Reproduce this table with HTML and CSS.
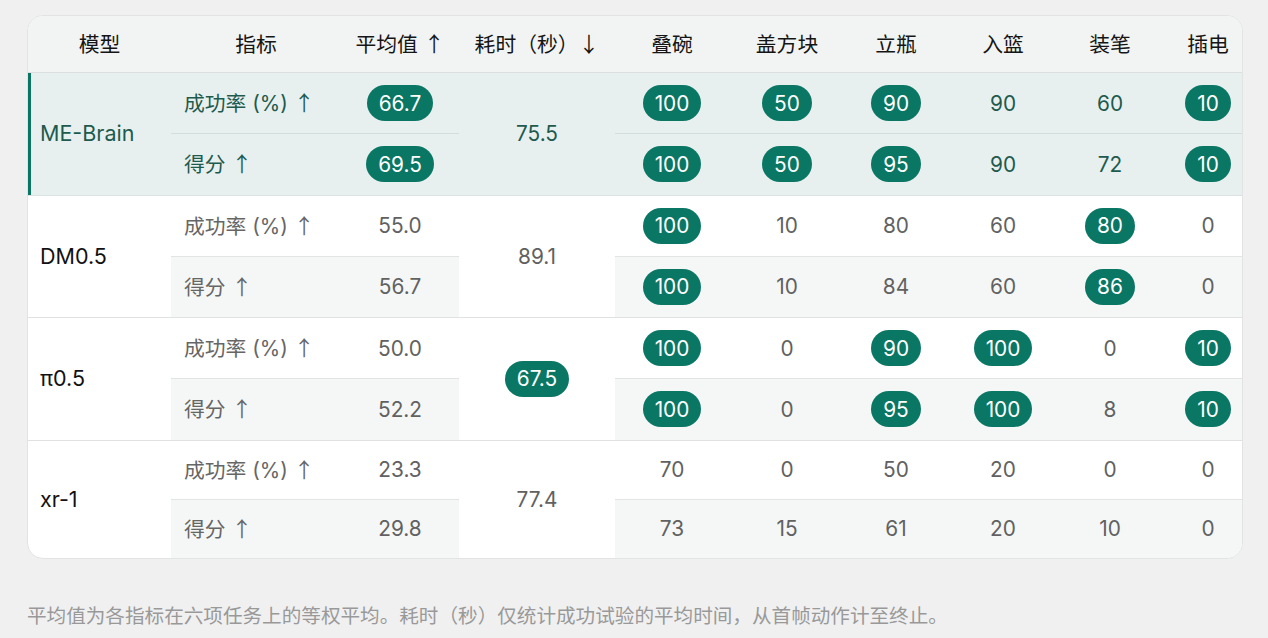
FILE: index.html
```html
<!DOCTYPE html>
<html lang="zh">
<head>
<meta charset="utf-8">
<title>评测结果</title>
<link rel="stylesheet" href="styles.css">
</head>
<body>
<div class="page">
  <div class="card">
    <table class="results">
      <colgroup>
        <col class="c-model"><col class="c-metric"><col class="c-avg"><col class="c-time">
        <col class="c-t1"><col class="c-t2"><col class="c-t3"><col class="c-t4"><col class="c-t5"><col class="c-t6">
      </colgroup>
      <thead>
        <tr>
          <th>模型</th><th>指标</th><th>平均值 <span class="arr">↑</span></th><th>耗时（秒）<span class="arr">↓</span></th>
          <th>叠碗</th><th>盖方块</th><th>立瓶</th><th>入篮</th><th>装笔</th><th class="last-col">插电</th>
        </tr>
      </thead>
      <tbody class="group hl">
        <tr class="sub1">
          <td class="model accent" rowspan="2">ME-Brain</td>
          <td class="metric">成功率 (%) <span class="arr">↑</span></td>
          <td><span class="pill">66.7</span></td>
          <td class="time" rowspan="2">75.5</td>
          <td><span class="pill">100</span></td><td><span class="pill">50</span></td><td><span class="pill">90</span></td><td>90</td><td>60</td><td class="last-col"><span class="pill">10</span></td>
        </tr>
        <tr class="sub2">
          <td class="metric">得分 <span class="arr">↑</span></td>
          <td><span class="pill">69.5</span></td>
          <td><span class="pill">100</span></td><td><span class="pill">50</span></td><td><span class="pill">95</span></td><td>90</td><td>72</td><td class="last-col"><span class="pill">10</span></td>
        </tr>
      </tbody>
      <tbody class="group">
        <tr class="sub1">
          <td class="model" rowspan="2">DM0.5</td>
          <td class="metric">成功率 (%) <span class="arr">↑</span></td>
          <td>55.0</td>
          <td class="time" rowspan="2">89.1</td>
          <td><span class="pill">100</span></td><td>10</td><td>80</td><td>60</td><td><span class="pill">80</span></td><td class="last-col">0</td>
        </tr>
        <tr class="sub2">
          <td class="metric">得分 <span class="arr">↑</span></td>
          <td>56.7</td>
          <td><span class="pill">100</span></td><td>10</td><td>84</td><td>60</td><td><span class="pill">86</span></td><td class="last-col">0</td>
        </tr>
      </tbody>
      <tbody class="group">
        <tr class="sub1">
          <td class="model" rowspan="2">π0.5</td>
          <td class="metric">成功率 (%) <span class="arr">↑</span></td>
          <td>50.0</td>
          <td class="time" rowspan="2"><span class="pill">67.5</span></td>
          <td><span class="pill">100</span></td><td>0</td><td><span class="pill">90</span></td><td><span class="pill">100</span></td><td>0</td><td class="last-col"><span class="pill">10</span></td>
        </tr>
        <tr class="sub2">
          <td class="metric">得分 <span class="arr">↑</span></td>
          <td>52.2</td>
          <td><span class="pill">100</span></td><td>0</td><td><span class="pill">95</span></td><td><span class="pill">100</span></td><td>8</td><td class="last-col"><span class="pill">10</span></td>
        </tr>
      </tbody>
      <tbody class="group last">
        <tr class="sub1">
          <td class="model" rowspan="2">xr-1</td>
          <td class="metric">成功率 (%) <span class="arr">↑</span></td>
          <td>23.3</td>
          <td class="time" rowspan="2">77.4</td>
          <td>70</td><td>0</td><td>50</td><td>20</td><td>0</td><td class="last-col">0</td>
        </tr>
        <tr class="sub2">
          <td class="metric">得分 <span class="arr">↑</span></td>
          <td>29.8</td>
          <td>73</td><td>15</td><td>61</td><td>20</td><td>10</td><td class="last-col">0</td>
        </tr>
      </tbody>
    </table>
  </div>
  <p class="note">平均值为各指标在六项任务上的等权平均。耗时（秒）仅统计成功试验的平均时间，从首帧动作计至终止。</p>
</div>
</body>
</html>
```

FILE: styles.css
```css
html, body {
  margin: 0;
  padding: 0;
  background: #f0f0f0;
}

body {
  font-family: "Inter", "Noto Sans CJK SC", sans-serif;
  color: #222;
}

.page {
  padding: 15px 25px 0 27px;
}

.card {
  background: #fff;
  border: 1px solid #e2e4e3;
  border-radius: 16px;
  overflow: hidden;
}

.results {
  width: 100%;
  table-layout: fixed;
  border-collapse: separate;
  border-spacing: 0;
  font-size: 20.8px;
  line-height: 33px;
}

.c-model { width: 143px; }
.c-metric { width: 170px; }
.c-avg { width: 118px; }
.c-time { width: 156px; }
.c-t1 { width: 114px; }
.c-t2 { width: 116px; }
.c-t3 { width: 102px; }
.c-t4 { width: 112px; }
.c-t5 { width: 102px; }
.c-t6 { width: 81px; }

.arr {
  font-family: "Noto Sans CJK SC", sans-serif;
}

.results th {
  background: #f2f4f3;
  font-weight: 400;
  color: #151515;
  padding: 11px 0;
  text-align: center;
  border-bottom: 1px solid #dcdfde;
  white-space: nowrap;
}

.results td {
  padding: 12.125px 0;
  text-align: center;
  vertical-align: middle;
  color: #616161;
  white-space: nowrap;
}

.results .last-col {
  padding-left: 13px;
}

.results td.model {
  text-align: left;
  padding-left: 12px;
  color: #111;
  font-size: 21.5px;
}

.results td.metric {
  text-align: left;
  padding-left: 13px;
  color: #666;
}

/* separators */
.sub1 td {
  border-bottom: 1px solid #e1e4e3;
}
.sub1 td.model,
.sub1 td.time,
.sub2 td {
  border-bottom: 1px solid #dfe2e1;
}
.group.last .sub1 td.model,
.group.last .sub1 td.time,
.group.last .sub2 td {
  border-bottom: none;
}

/* shaded second sub-row */
.sub2 td {
  background: #f5f7f6;
}

/* highlighted group */
.group.hl td {
  background: #e7f0ee;
  color: #1e5a4e;
}
.group.hl .sub1 td {
  border-bottom-color: #d2dedb;
}
.group.hl .sub1 td.model,
.group.hl .sub1 td.time,
.group.hl .sub2 td {
  border-bottom-color: #dbe2e0;
}
.results td.accent {
  box-shadow: inset 3px 0 0 #0a7563;
}

.pill {
  display: inline-block;
  background: #0a7664;
  color: #fff;
  border-radius: 18px;
  padding: 1.5px 12px;
  line-height: 33px;
}

.note {
  margin: 42px 0 0 0;
  font-size: 19.6px;
  line-height: 31px;
  color: #999;
}
```
